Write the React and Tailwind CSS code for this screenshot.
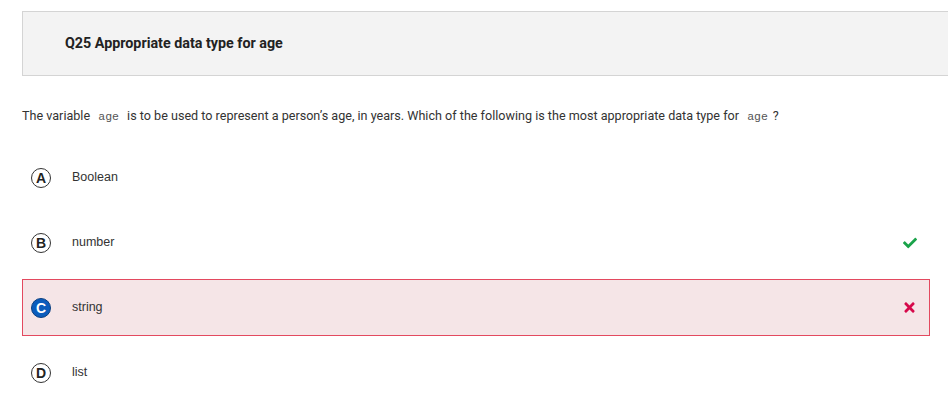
import { FaCheck, FaTimes } from 'react-icons/fa'

const OPTIONS = [
  { key: 'A', label: 'Boolean' },
  { key: 'B', label: 'number', correct: true },
  { key: 'C', label: 'string', picked: true },
  { key: 'D', label: 'list' },
]

function Code({ children }) {
  return (
    <code className="px-[5px] font-['Liberation_Mono',monospace] text-[11.5px] text-[#555]">{children}</code>
  )
}

export default function App() {
  return (
    <div className="min-h-[406px] overflow-hidden bg-white pt-[11px] font-['Roboto',sans-serif] text-[#333]">
      <div className="ml-[22px] mr-[-4px] flex h-[65px] items-center border border-[#d4d4d4] bg-[#f3f3f3] pl-[42px]">
        <h2 className="text-[14.3px] font-bold text-[#222]">Q25 Appropriate data type for age</h2>
      </div>

      <p className="ml-[22px] mt-[31px] text-[12.6px] leading-[17px] text-[#333]">
        The variable <Code>age</Code> is to be used to represent a person’s age, in years. Which of the following is the most appropriate data type for <Code>age</Code>?
      </p>

      <div className="mt-[24px] flex flex-col gap-[8px]">
        {OPTIONS.map((o) => (
          <div
            key={o.key}
            className={`ml-[22px] flex h-[57px] w-[908px] items-center border pl-[8px] pr-[12px] ${
              o.picked ? 'border-[#e3495f] bg-[#f5e5e7]' : 'border-transparent'
            }`}
          >
            <span
              className={`grid h-[20px] w-[20px] place-items-center rounded-full border text-[14px] font-bold leading-none ${
                o.picked
                  ? 'border-[#0b3f80] bg-[#0b5cbc] text-white'
                  : 'border-[#333] bg-white text-[#222]'
              } font-['Liberation_Sans',sans-serif]`}
            >
              {o.key}
            </span>
            <span className="ml-[21px] flex-1 font-['Liberation_Sans',sans-serif] text-[12.5px] text-[#333]">{o.label}</span>
            {o.correct && <FaCheck className="h-[14px] w-[14px] text-[#1aa34a]" />}
            {o.picked && <FaTimes className="mr-[1px] h-[15px] w-[13px] text-[#d6094b]" />}
          </div>
        ))}
      </div>
    </div>
  )
}
